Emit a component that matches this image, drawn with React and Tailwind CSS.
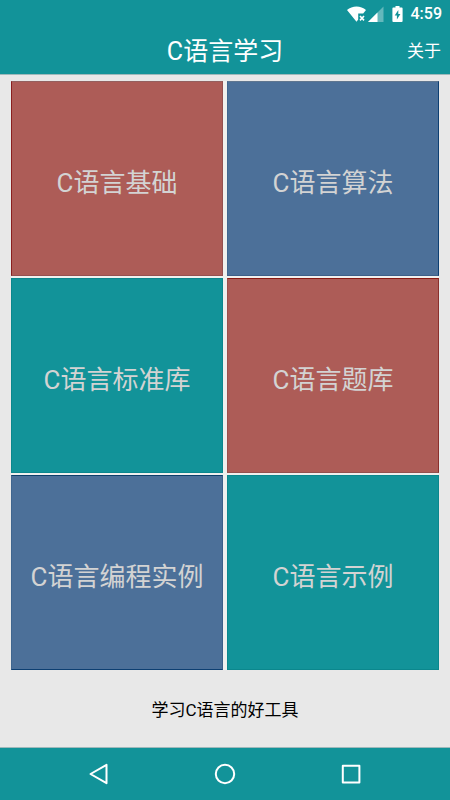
const topics = [
  { id: "basics", title: "C语言基础", tone: "bg-[#ad5c57] border-t-[#94605f] border-l-[#8a1f1f] border-b-[#94504f] border-r-[#94504f]" },
  { id: "algorithms", title: "C语言算法", tone: "bg-[#4c7099] border-t-[#5f7690] border-l-[#40668f] border-b-[#3d5f88] border-r-[#0d3f72]" },
  { id: "stdlib", title: "C语言标准库", tone: "bg-[#129399] border-[#0b878d]" },
  { id: "questions", title: "C语言题库", tone: "bg-[#ad5c57] border-t-[#8a1a12] border-l-[#9c504c] border-b-[#94504f] border-r-[#8a2f2c]" },
  { id: "practice", title: "C语言编程实例", tone: "bg-[#4c7099] border-t-[#0d3f6a] border-l-[#40668f] border-b-[#0d3f72] border-r-[#3d5f88]" },
  { id: "examples", title: "C语言示例", tone: "bg-[#129399] border-[#0b878d]" },
];

const StatusBar = () => (
  <div className="flex h-7 items-center justify-end pr-2 text-white">
    <svg width="20" height="16" viewBox="0 0 20 16" className="mr-px" aria-hidden="true">
      <path d="M0 4C5 -0.7 14 -0.7 19 4L16.2 7.6H11.2V13.6L9.5 15.8Z" fill="currentColor" />
      <path d="M13 10l4 4.4M17 10l-4 4.4" stroke="currentColor" strokeWidth="1.6" />
    </svg>
    <svg width="16" height="16" viewBox="0 0 16 16" className="mr-2" aria-hidden="true">
      <path d="M0 16L15.5 0.5V16Z" fill="currentColor" opacity="0.35" />
      <path d="M0 16L9.5 6.5V16Z" fill="currentColor" />
    </svg>
    <svg width="11" height="16" viewBox="0 0 11 16" className="mr-2" aria-hidden="true">
      <path
        fillRule="evenodd"
        fill="currentColor"
        d="M3.5 0h4v1.5h2.2q.9 0 .9.9v12.7q0 .9-.9.9H1.3q-.9 0-.9-.9V2.4q0-.9.9-.9h2.2zM6.3 4L2.7 9.6h2.2v4L8.4 8H6.3z"
      />
    </svg>
    <span className="text-base font-medium leading-5">4:59</span>
  </div>
);

const Header = () => (
  <header className="border-b border-[#9fb9bb] bg-[#129399] text-white">
    <StatusBar />
    <div className="grid h-[46px] grid-cols-[1fr_auto_1fr] items-center px-[9px]">
      <h1 className="col-start-2 pt-0.5 text-[25px] leading-8">C语言学习</h1>
      <button type="button" className="justify-self-end text-[17px] leading-6">
        关于
      </button>
    </div>
  </header>
);

const NavBar = () => (
  <nav className="flex h-[53px] items-center justify-around border-t border-[#9fb9bb] bg-[#129399] px-9 text-white">
    <button type="button" aria-label="Back" className="p-2">
      <svg width="22" height="22" viewBox="0 0 22 22" fill="none" stroke="currentColor" strokeWidth="2" strokeLinejoin="round">
        <path d="M18.5 1.8V20.2L2.5 11Z" />
      </svg>
    </button>
    <button type="button" aria-label="Home" className="p-2">
      <svg width="22" height="22" viewBox="0 0 22 22" fill="none" stroke="currentColor" strokeWidth="2">
        <circle cx="11" cy="11" r="9.2" />
      </svg>
    </button>
    <button type="button" aria-label="Recents" className="p-2">
      <svg width="22" height="22" viewBox="0 0 22 22" fill="none" stroke="currentColor" strokeWidth="2" strokeLinejoin="round">
        <rect x="2.8" y="2.8" width="16.6" height="16.6" />
      </svg>
    </button>
  </nav>
);

const App = () => {
  return (
    <div className="flex min-h-screen flex-col bg-[#e8e8e8] font-['Roboto','Noto_Sans_CJK_SC',sans-serif]" lang="zh-CN">
      <Header />
      <main className="flex flex-1 flex-col px-[11px] pt-1.5">
        <div className="grid flex-1 auto-rows-fr grid-cols-2 gap-x-1 gap-y-0.5 bg-[#f0f0ee]">
          {topics.map((topic) => (
            <button
              key={topic.id}
              type="button"
              className={`border pt-2 text-[26px] leading-9 text-[#d3d3d3] ${topic.tone}`}
            >
              {topic.title}
            </button>
          ))}
        </div>
        <p className="pt-7 pb-6 text-center text-[17px] leading-[25px] text-black">学习C语言的好工具</p>
      </main>
      <NavBar />
    </div>
  );
};

export default App;
